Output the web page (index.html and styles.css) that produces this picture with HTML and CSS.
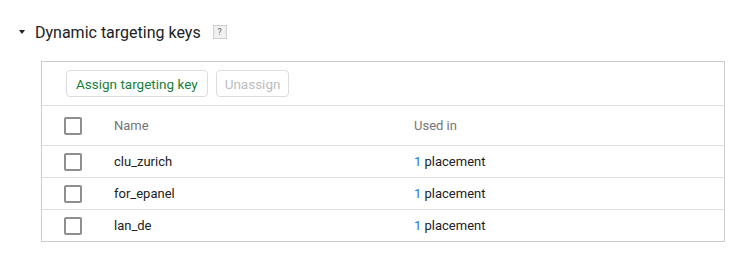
FILE: index.html
```html
<!DOCTYPE html>
<html lang="en">
<head>
    <meta charset="UTF-8">
    <title>Dynamic targeting keys</title>
    <link rel="stylesheet" href="styles.css">
</head>
<body>
    <div class="section-head">
        <span class="caret"></span>
        <h2>Dynamic targeting keys</h2>
        <span class="help">?</span>
    </div>

    <div class="card">
        <div class="toolbar">
            <button class="btn primary">Assign targeting key</button>
            <button class="btn" disabled>Unassign</button>
        </div>

        <div class="row head">
            <span class="check"></span>
            <span>Name</span>
            <span>Used in</span>
        </div>
        <div class="row">
            <span class="check"></span>
            <span>clu_zurich</span>
            <span><a class="count">1</a> placement</span>
        </div>
        <div class="row">
            <span class="check"></span>
            <span>for_epanel</span>
            <span><a class="count">1</a> placement</span>
        </div>
        <div class="row">
            <span class="check"></span>
            <span>lan_de</span>
            <span><a class="count">1</a> placement</span>
        </div>
    </div>
</body>
</html>
```

FILE: styles.css
```css
body {
    margin: 0;
    font-family: Roboto, "Liberation Sans", Arial, sans-serif;
    color: #212121;
    background: #fff;
}
.section-head {
    display: flex;
    align-items: center;
    height: 24px;
    padding: 20px 0 0 19px;
}
.caret {
    width: 0;
    height: 0;
    border-left: 3.5px solid transparent;
    border-right: 3.5px solid transparent;
    border-top: 4px solid #212121;
    margin-right: 10px;
}
.section-head h2 {
    margin: 0;
    font-size: 16px;
    font-weight: 400;
    color: #202124;
}
.help {
    display: inline-flex;
    align-items: center;
    justify-content: center;
    width: 12px;
    height: 12px;
    margin-left: 12px;
    border: 1px solid #cfcfcf;
    background: #f1f1f1;
    color: #666;
    font-size: 9px;
    line-height: 1;
}
.card {
    margin: 17px 0 0 41px;
    width: 682px;
    border: 1px solid #cccccc;
}
.toolbar {
    display: flex;
    gap: 8px;
    padding: 8px 24px;
    border-bottom: 1px solid #e0e0e0;
}
.btn {
    height: 27px;
    padding: 0 8px;
    background: #fff;
    border: 1px solid #dadce0;
    border-radius: 4px;
    font-family: inherit;
    font-size: 13.5px;
    font-weight: 400;
    color: #bdbdbd;
}
.btn.primary {
    color: #188038;
    padding: 0 9px;
}
.row {
    display: grid;
    grid-template-columns: 50px 300px 1fr;
    align-items: center;
    height: 31px;
    padding-left: 22px;
    font-size: 13px;
    border-top: 1px solid #e0e0e0;
}
.row.head {
    height: 39px;
    border-top: none;
    color: #757575;
}
.check {
    width: 14px;
    height: 14px;
    border: 2px solid #8f8f8f;
    border-radius: 2px;
}
.count {
    color: #1a73e8;
}
```
